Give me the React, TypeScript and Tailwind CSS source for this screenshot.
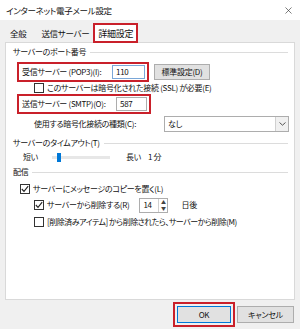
import { X } from "lucide-react";

function Check({ checked = false }: { checked?: boolean }) {
  return (
    <span className="inline-flex h-[10px] w-[10px] shrink-0 items-center justify-center border border-[#333] bg-white">
      {checked ? (
        <svg width="8" height="8" viewBox="0 0 8 8">
          <path d="M0.8 4 L3 6.3 L7.2 1.2" fill="none" stroke="#222" strokeWidth="1.1" />
        </svg>
      ) : null}
    </span>
  );
}

function GroupHead({ label, h }: { label: string; h: string }) {
  return (
    <div className={`flex ${h} items-center gap-[4px] pr-[6px]`}>
      <span>{label}</span>
      <span className="h-px flex-1 bg-[#dcdcdc]" />
    </div>
  );
}

export default function App() {
  return (
    <div className="flex h-[329px] w-[300px] flex-col whitespace-nowrap bg-[#f0f0f0] font-['Noto_Sans_CJK_JP',sans-serif] text-[8px] leading-none tracking-[-0.3px] text-[#111] [font-feature-settings:'palt']">
      <div className="flex h-[20px] items-center justify-between bg-white pl-[6px] pr-[6px] text-[8.5px]">
        <span>インターネット電子メール設定</span>
        <X size={11} strokeWidth={1.4} className="text-[#333]" />
      </div>

      <div className="flex h-[22px] items-end pl-[5px] text-[8.5px]">
        <div className="flex h-[17px] items-center pl-[5px] pr-[15px]">全般</div>
        <div className="flex h-[17px] items-center pr-[4px]">送信サーバー</div>
        <div className="relative -mb-px flex h-[20px] items-center border-2 border-[#c9202a] bg-white px-[3px] text-[9px]">
          詳細設定
        </div>
      </div>

      <div className="mx-[5px] flex h-[258px] flex-col border border-[#d9d9d9] bg-white pl-[7px]">
        <GroupHead label="サーバーのポート番号" h="h-[18px]" />

        <div className="flex h-[21px] items-center">
          <div className="ml-[4px] flex h-[20px] w-[132px] items-center justify-between border-2 border-[#c9202a] pl-[3px] pr-[2px]">
            <span>受信サーバー (POP3)(I):</span>
            <span className="flex h-[14px] w-[33px] items-center border border-[#7aa7d8] pl-[3px]">110</span>
          </div>
          <button className="ml-[5px] h-[16px] w-[56px] border border-[#adadad] bg-[#e1e1e1] text-[8px] tracking-[-0.3px]">
            標準設定(D)
          </button>
        </div>

        <div className="ml-[21px] mt-[1px] flex h-[10px] items-center gap-[3px]">
          <Check />
          <span>このサーバーは暗号化された接続 (SSL) が必要(E)</span>
        </div>

        <div className="flex h-[22px] items-center">
          <div className="ml-[4px] flex h-[20px] w-[134px] items-center justify-between border-2 border-[#c9202a] pl-[3px] pr-[2px]">
            <span>送信サーバー (SMTP)(O):</span>
            <span className="flex h-[14px] w-[31px] items-center border border-[#adadad] pl-[3px]">587</span>
          </div>
        </div>

        <div className="flex h-[18px] items-center pr-[5px]">
          <span className="ml-[21px]">使用する暗号化接続の種類(C):</span>
          <div className="ml-auto flex h-[16px] w-[125px] items-center border border-[#adadad] bg-white">
            <span className="flex-1 pl-[3px]">なし</span>
            <span className="flex h-full w-[13px] items-center justify-center border-l border-[#d0d0d0] bg-[#f0f0f0]">
              <svg width="7" height="4" viewBox="0 0 7 4">
                <path d="M0.5 0.5 L3.5 3.2 L6.5 0.5" fill="none" stroke="#555" strokeWidth="1" />
              </svg>
            </span>
          </div>
        </div>

        <GroupHead label="サーバーのタイムアウト(T)" h="h-[20px]" />

        <div className="flex h-[8px] items-center">
          <span className="ml-[10px]">短い</span>
          <div className="relative ml-[14px] h-[3px] w-[58px] bg-[#e7e7e7]">
            <span className="absolute left-[5px] top-[-3px] h-[9px] w-[4px] bg-[#0078d7]" />
          </div>
          <span className="ml-[16px]">長い</span>
          <span className="ml-[7px]">1 分</span>
        </div>

        <GroupHead label="配信" h="h-[22px]" />

        <div className="ml-[7px] flex h-[12px] items-center gap-[3px]">
          <Check checked />
          <span>サーバーにメッセージのコピーを置く(L)</span>
        </div>

        <div className="ml-[21px] flex h-[20px] items-center">
          <Check checked />
          <span className="ml-[3px]">サーバーから削除する(R)</span>
          <div className="ml-[10px] flex h-[15px] w-[29px] items-center border border-[#adadad] pl-[3px]">
            <span className="flex-1">14</span>
            <span className="flex h-full w-[9px] flex-col items-center justify-center border-l border-[#d0d0d0] text-[5px] leading-[6px] text-[#444]">
              <span>▲</span>
              <span>▼</span>
            </span>
          </div>
          <span className="ml-[13px]">日後</span>
        </div>

        <div className="ml-[21px] flex h-[14px] items-center gap-[3px]">
          <Check />
          <span className="tracking-[-0.5px]">[削除済みアイテム] から削除されたら、サーバーから削除(M)</span>
        </div>
      </div>

      <div className="flex flex-1 items-start justify-end gap-[2px] pr-[6px] pt-[2px]">
        <div className="border-2 border-[#c9202a] p-[2px]">
          <button className="h-[17px] w-[54px] border border-[#0078d7] bg-[#e1e1e1] text-[8px]">OK</button>
        </div>
        <button className="mt-[4px] h-[17px] w-[57px] border border-[#adadad] bg-[#e1e1e1] text-[8px] tracking-[-0.3px]">
          キャンセル
        </button>
      </div>
    </div>
  );
}
